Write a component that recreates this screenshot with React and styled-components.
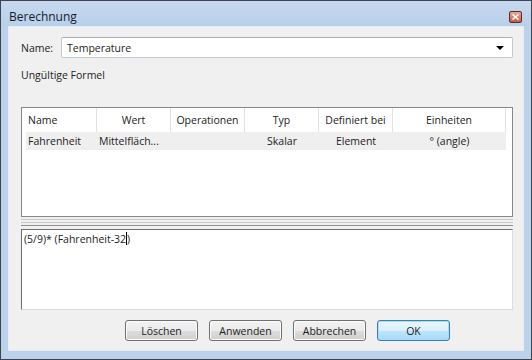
import React from 'react'
import styled, { createGlobalStyle } from 'styled-components'

const Global = createGlobalStyle`
  html, body {
    margin: 0;
    padding: 0;
    background: #ffffff;
  }
  * { box-sizing: border-box; }
`

const font = `"Segoe UI", "Open Sans", "Liberation Sans", sans-serif`

const columns = [
  { title: 'Name', width: 75, align: 'left' },
  { title: 'Wert', width: 74, align: 'center' },
  { title: 'Operationen', width: 74, align: 'center' },
  { title: 'Typ', width: 74, align: 'center' },
  { title: 'Definiert bei', width: 74, align: 'center' },
  { title: 'Einheiten', width: 113, align: 'center' }
]

const rows = [
  ['Fahrenheit', 'Mittelfläch...', '', 'Skalar', 'Element', '° (angle)']
]

function App() {
  return (
    <>
      <Global />
      <Window>
        <TitleBar>
          <Title>Berechnung</Title>
          <CloseBtn>
            <svg width="7" height="6" viewBox="0 0 7 6">
              <path d="M0.5 0.5 L6.5 5.5 M6.5 0.5 L0.5 5.5" stroke="#ffffff" strokeWidth="1.6" />
            </svg>
          </CloseBtn>
        </TitleBar>
        <Body>
          <NameRow>
            <Label>Name:</Label>
            <Combo>
              <ComboText>Temperature</ComboText>
              <Arrow />
            </Combo>
          </NameRow>
          <Status>Ungültige Formel</Status>
          <Table>
            <HeaderRow>
              {columns.map((c) => (
                <HeadCell key={c.title} $w={c.width} $align={c.align}>
                  {c.title}
                </HeadCell>
              ))}
              <HeadTail />
            </HeaderRow>
            {rows.map((r, i) => (
              <DataRow key={i}>
                {r.map((v, j) => (
                  <Cell
                    key={j}
                    $w={columns[j].width}
                    $align={j === 1 ? 'left' : columns[j].align}
                  >
                    {v}
                  </Cell>
                ))}
              </DataRow>
            ))}
          </Table>
          <Splitter>
            <SplitLine />
            <SplitLine />
            <SplitLine $dark />
          </Splitter>
          <Editor>
            (5/9)* (Fahrenheit-32<Caret />)
          </Editor>
          <ButtonRow>
            <Button>Löschen</Button>
            <Button>Anwenden</Button>
            <Button>Abbrechen</Button>
            <Button $default>OK</Button>
          </ButtonRow>
        </Body>
      </Window>
    </>
  )
}

const Window = styled.div`
  width: 532px;
  height: 360px;
  border: 1px solid #3d4450;
  background: #bcd2ea;
  display: flex;
  flex-direction: column;
  font-family: ${font};
  font-size: 10.5px;
  color: #222222;
`

const TitleBar = styled.div`
  height: 25px;
  display: flex;
  align-items: center;
  justify-content: space-between;
  padding: 0 9px 0 8px;
  background: linear-gradient(#c6d9ef, #b9d0ea);
`

const Title = styled.div`
  font-size: 12px;
  color: #141e2c;
  margin-top: 5px;
`

const CloseBtn = styled.div`
  width: 13px;
  height: 12px;
  margin-top: 6px;
  border: 1px solid #5a2a24;
  border-radius: 2px;
  background: linear-gradient(#e8a89a, #c85a44);
  display: flex;
  align-items: center;
  justify-content: center;
`

const Body = styled.div`
  flex: 1;
  margin: 0 7px 8px 7px;
  background: #f0f0f0;
  border: 1px solid #e4ecf6;
  display: flex;
  flex-direction: column;
  padding: 10px 10px 0 12px;
`

const NameRow = styled.div`
  display: flex;
  align-items: center;
  height: 21px;
`

const Label = styled.div`
  width: 40px;
`

const Combo = styled.div`
  flex: 1;
  height: 21px;
  background: #ffffff;
  border: 1px solid #c4c9d0;
  border-top-color: #aaadb2;
  border-radius: 2px;
  display: flex;
  align-items: center;
  justify-content: space-between;
  padding: 0 8px 0 5px;
`

const ComboText = styled.div``

const Arrow = styled.div`
  width: 0;
  height: 0;
  border-left: 4px solid transparent;
  border-right: 4px solid transparent;
  border-top: 4px solid #000000;
  margin-top: 1px;
`

const Status = styled.div`
  margin-top: 10px;
  height: 14px;
  line-height: 14px;
`

const Table = styled.div`
  margin-top: 25px;
  height: 110px;
  background: #ffffff;
  border: 1px solid #828790;
  padding-left: 4px;
`

const HeaderRow = styled.div`
  display: flex;
  height: 24px;
  margin-left: -4px;
`

const HeadCell = styled.div`
  width: ${(p) => p.$w}px;
  flex-shrink: 0;
  border-right: 1px solid #e3e3e3;
  display: flex;
  align-items: center;
  justify-content: ${(p) => (p.$align === 'left' ? 'flex-start' : 'center')};
  padding-left: ${(p) => (p.$align === 'left' ? '6px' : '0')};
`

const HeadTail = styled.div`
  flex: 1;
`

const DataRow = styled.div`
  display: flex;
  height: 18px;
  width: 480px;
  background: #efefef;
`

const Cell = styled.div`
  width: ${(p) => p.$w}px;
  flex-shrink: 0;
  display: flex;
  align-items: center;
  justify-content: ${(p) => (p.$align === 'left' ? 'flex-start' : 'center')};
  padding-left: ${(p) => (p.$align === 'left' ? '2px' : '0')};
  white-space: nowrap;
  overflow: hidden;
  &:first-child { width: ${(p) => p.$w - 4}px; }
`

const Splitter = styled.div`
  height: 12px;
  display: flex;
  flex-direction: column;
  padding-top: 2px;
  gap: 2px;
`

const SplitLine = styled.div`
  height: 1px;
  background: ${(p) => (p.$dark ? '#8e8e8e' : '#c9c9c9')};
`

const Editor = styled.div`
  height: 81px;
  background: #ffffff;
  border: 1px solid #dcdcdc;
  border-top-color: #6e6e6e;
  border-left-color: #6e6e6e;
  padding: 2px 2px;
  line-height: 14px;
`

const Caret = styled.span`
  display: inline-block;
  width: 1px;
  height: 13px;
  background: #000000;
  vertical-align: -2px;
`

const ButtonRow = styled.div`
  display: flex;
  gap: 11px;
  margin-top: 10px;
  padding-left: 104px;
`

const Button = styled.div`
  width: 73px;
  height: 21px;
  border: 1px solid ${(p) => (p.$default ? '#3c7fb1' : '#707070')};
  border-radius: 3px;
  background: ${(p) =>
    p.$default
      ? 'linear-gradient(#eaf6fd 0%, #d9f0fc 50%, #bee6fd 51%, #a7d9f5 100%)'
      : 'linear-gradient(#f2f2f2 0%, #ebebeb 50%, #dddddd 51%, #cfcfcf 100%)'};
  box-shadow: inset 0 0 0 1px ${(p) => (p.$default ? '#a4ddf6' : '#fcfcfc')};
  display: flex;
  align-items: center;
  justify-content: center;
`

export default App
